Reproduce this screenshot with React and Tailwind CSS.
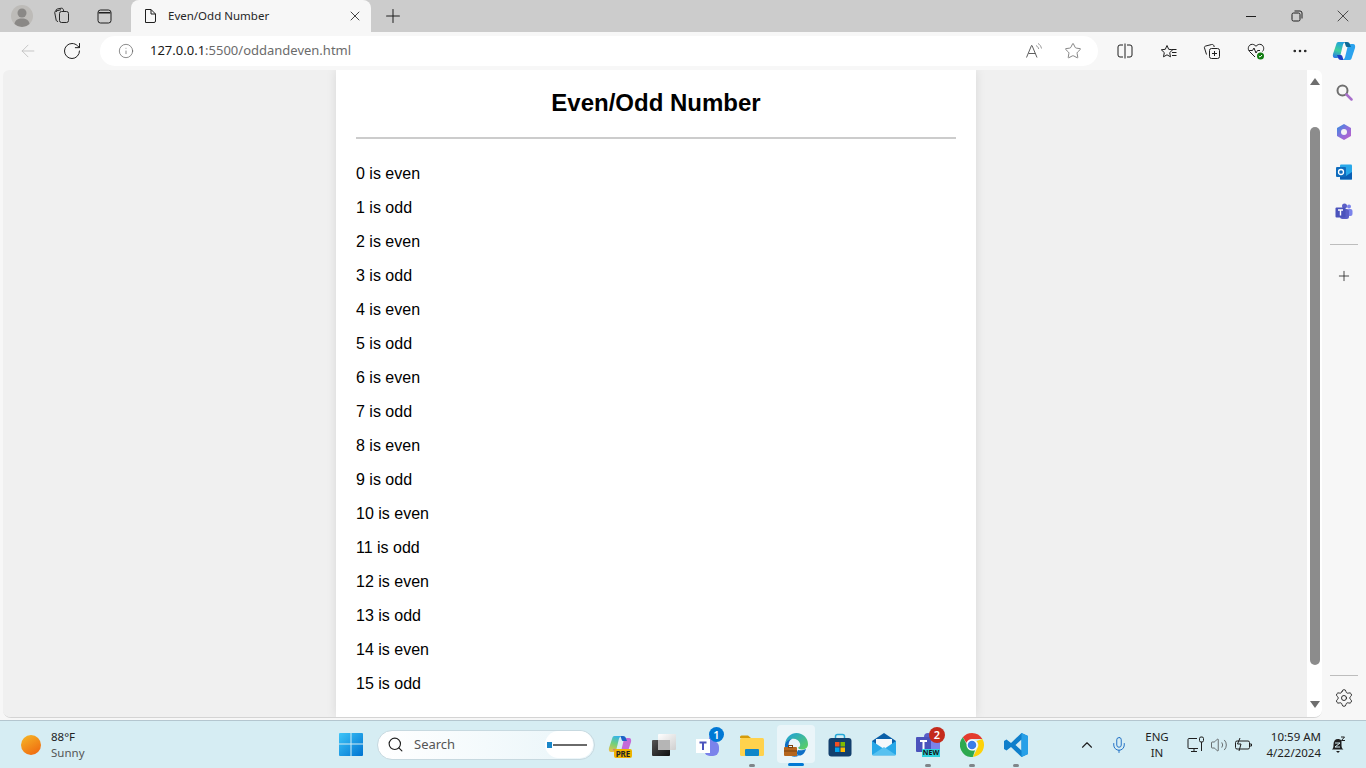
import { ArrowLeft, RotateCw, Info, Star, Plus, X, Search, ChevronUp, Mic, MoreHorizontal, Settings, Volume2 } from "lucide-react";

const NUMBERS = Array.from({ length: 16 }, (_, i) => i);

function ToolbarBtn({ children }) {
  return <div className="flex items-center justify-center w-[43.8px] h-full shrink-0">{children}</div>;
}

function Dot() {
  return <div className="absolute bottom-[1px] left-1/2 -translate-x-1/2 w-[6px] h-[3px] rounded-full bg-[#7f8589]" />;
}

function Copilot({ id, stops, right, top, bottom }) {
  return (
    <svg width="24" height="24" viewBox="0 0 24 24">
      <defs>
        <linearGradient id={id} x1="0.600" y1="0" x2="0.300" y2="1">
          {stops.map((s, i) => (
            <stop key={i} offset={s[0]} stopColor={s[1]} />
          ))}
        </linearGradient>
      </defs>
      <path d="M6.500 3h8c-2 0-3 1-3.600 3L8.500 16c-.5 2-1.500 3-3.500 3H3c-2 0-2.500-2-2-4L4 6c.5-2 1-3 2.500-3z" fill={"url(#" + id + ")"} />
      <path d="M17.500 21h-8c2 0 3-1 3.600-3L15.500 8c.5-2 1.500-3 3.500-3h2c2 0 2.500 2 2 4l-3 9c-.5 2-1 3-2.500 3z" fill={right} />
      <path d="M12.500 3h2.500c2 0 2.600 1 3 2.500L19 8h-3.500c-1 0-1.600-.5-1.900-1.500z" fill={top} />
      <path d="M11.500 21H9c-2 0-2.600-1-3-2.500L5 16h3.500c1 0 1.600.5 1.900 1.500z" fill={bottom} />
    </svg>
  );
}

function Tabs() {
  return (
    <div className="h-8 bg-[#cccccc] flex items-center shrink-0">
      <div className="w-[44px] flex justify-center">
        <svg width="22" height="22" viewBox="0 0 22 22">
          <circle cx="11" cy="11" r="11" fill="#bdbbb8" />
          <circle cx="11" cy="8" r="4.500" fill="#8a8886" />
          <path d="M3.500 19c.5-4 3.500-5.500 7.500-5.500s7 1.500 7.500 5.500a11 11 0 0 1-15 0z" fill="#8a8886" />
        </svg>
      </div>
      <div className="w-[36px] flex justify-center">
        <svg width="18" height="18" viewBox="0 0 18 18" fill="none" stroke="#262626" strokeWidth="1">
          <rect x="6.500" y="4.500" width="9" height="11" rx="2" />
          <path d="M5 14.500c-1 0-1.500-.5-1.800-1.200L1.800 6c-.2-1 .2-1.800 1.200-2l5-1.300" />
          <path d="M3.500 5L3 3.500c0-.8.500-1.300 1.300-1.500l4-.8c1-.1 1.700.4 2 1.300L10.700 4" />
        </svg>
      </div>
      <div className="w-[48px] flex justify-center">
        <svg width="15" height="15" viewBox="0 0 15 15" fill="none" stroke="#1f1f1f" strokeWidth="1">
          <rect x="1" y="1" width="13" height="13" rx="2.500" />
          <path d="M1.500 3h12v1.500h-12z" fill="#1f1f1f" stroke="none" />
        </svg>
      </div>
      <div className="relative h-full w-[240px] ml-[3px] bg-[#f7f7f7] rounded-t-[8px] flex items-center text-[#262626]">
        <svg className="ml-[13px]" width="12" height="14" viewBox="0 0 12 14" fill="none" stroke="#1f1f1f" strokeWidth="1">
          <path d="M1.500.5h5.500l4.500 4.500v7a1.500 1.500 0 0 1-1.500 1.500h-8.500z" strokeLinejoin="round" />
          <path d="M7 .5v4.500h4.500" />
        </svg>
        <span className="ml-[12px] text-[11.5px] font-['Noto_Sans',sans-serif]">Even/Odd Number</span>
        <X className="ml-auto mr-[8px]" size={16} strokeWidth={1.300} />
      </div>
      <div className="w-[44px] flex justify-center">
        <Plus size={22} strokeWidth={1.100} className="text-[#1f1f1f]" />
      </div>
      <div className="ml-auto flex items-center text-[#1f1f1f]">
        <div className="w-[46px] flex justify-center"><div className="w-[10px] h-px bg-[#1f1f1f]" /></div>
        <div className="w-[46px] flex justify-center">
          <svg width="12" height="12" viewBox="0 0 12 12" fill="none" stroke="#1f1f1f" strokeWidth="1">
            <rect x="1" y="3" width="8" height="8" rx="1.500" />
            <path d="M3.500 1h5.500a2 2 0 0 1 2 2v5.500" />
          </svg>
        </div>
        <div className="w-[46px] flex justify-center"><X size={20} strokeWidth={0.900} /></div>
      </div>
    </div>
  );
}

function Toolbar() {
  return (
    <div className="h-[38px] bg-[#f7f7f7] flex items-center shrink-0 overflow-hidden">
      <div className="w-[56px] flex justify-center shrink-0">
        <ArrowLeft size={20} strokeWidth={1} className="text-[#bdbdbd]" />
      </div>
      <div className="w-[32px] flex justify-center shrink-0">
        <RotateCw size={20} strokeWidth={1.200} className="text-[#1f1f1f]" />
      </div>
      <div className="ml-[12px] h-[30px] w-[998px] shrink-0 bg-white rounded-full flex items-center text-[13px] font-['Noto_Sans',sans-serif]">
        <Info size={16} strokeWidth={1} className="ml-[18px] text-[#555]" />
        <span className="ml-[16px] text-[#1a1a1a]">127.0.0.1</span>
        <span className="text-[#6b6b6b]">:5500/oddandeven.html</span>
        <svg className="ml-auto" width="18" height="18" viewBox="0 0 18 18" fill="none" stroke="#5f5f5f" strokeWidth="1">
          <path d="M1.500 15.500L6.500 3.500h.5l5 12M3.500 11.500h7" />
          <path d="M11 3.500c1.500.8 2.300 2 2.700 3.500M13 1.500c2 1 3 2.800 3.500 5" stroke="#9a9a9a" />
        </svg>
        <Star size={18} strokeWidth={1} className="ml-[21px] mr-[16px] text-[#5f5f5f]" />
      </div>
      <div className="ml-[5px] flex items-center h-full shrink-0">
        <ToolbarBtn>
          <svg width="16" height="16" viewBox="0 0 16 16" fill="none" stroke="#1f1f1f" strokeWidth="1">
            <path d="M6 2H3a2 2 0 0 0-2 2v8a2 2 0 0 0 2 2h3M10 2h3a2 2 0 0 1 2 2v8a2 2 0 0 1-2 2h-3M8 .5v15" />
          </svg>
        </ToolbarBtn>
        <ToolbarBtn>
          <svg width="18" height="18" viewBox="0 0 18 18" fill="none" stroke="#1f1f1f" strokeWidth="1">
            <path d="M7 1.500l1.700 3.800 4 .5-3 2.800.8 4.200L7 10.800l-3.500 2 .8-4.200-3-2.800 4-.5z" strokeLinejoin="round" transform="translate(0 2)" />
            <path d="M12 7.500h4.500M12 10.500h4.500M12 13.500h4.500" />
          </svg>
        </ToolbarBtn>
        <ToolbarBtn>
          <svg width="18" height="18" viewBox="0 0 18 18" fill="none" stroke="#1f1f1f" strokeWidth="1">
            <path d="M3.500 12.500L1.500 6c-.3-1 .2-1.800 1.200-2l6-1.500c1-.2 1.800.2 2.200 1.200l.3 1.300" />
            <rect x="6.500" y="6.500" width="10" height="10" rx="2" />
            <path d="M11.500 9v5M9 11.500h5" />
          </svg>
        </ToolbarBtn>
        <ToolbarBtn>
          <svg width="18" height="18" viewBox="0 0 18 18" fill="none">
            <path d="M8 15L2.500 9.500C.5 7.500 1 3.500 4 2.500c2-.6 3.700.3 5 1.800 1.300-1.500 3-2.400 5-1.800 3 1 3.500 5 1.500 7" stroke="#1f1f1f" />
            <path d="M2 8.500h3.500L7 6l2 5 1.500-2.500H13" stroke="#1f1f1f" />
            <circle cx="13.500" cy="14" r="3.500" fill="#107c10" />
            <path d="M11.800 14l1.200 1.200 2-2.200" stroke="#fff" />
          </svg>
        </ToolbarBtn>
        <ToolbarBtn><MoreHorizontal size={18} strokeWidth={1.500} className="text-[#1f1f1f]" /></ToolbarBtn>
        <ToolbarBtn>
          <Copilot
            id="cpTool"
            stops={[[0, "#1f9fe0"], [0.55, "#3dcf9c"], [1, "#2a7be4"]]}
            right="#2ba3ee"
            top="#0c6a96"
            bottom="#1c3fc4"
          />
        </ToolbarBtn>
      </div>
    </div>
  );
}

function Sidebar() {
  return (
    <div className="w-[44px] shrink-0 flex flex-col items-center pt-[13px] bg-[#f7f7f7]">
      <svg width="18" height="18" viewBox="0 0 18 18" fill="none">
        <circle cx="7.500" cy="7.500" r="5" stroke="#6f6f6f" strokeWidth="2" />
        <path d="M11.500 11.500l5 5" stroke="#a86fcb" strokeWidth="2.500" strokeLinecap="round" />
      </svg>
      <svg className="mt-[22px]" width="18" height="18" viewBox="0 0 18 18">
        <defs>
          <linearGradient id="m365" x1="0" y1="0" x2="1" y2="1">
            <stop offset="0" stopColor="#2f8ee0" />
            <stop offset=".5" stopColor="#8b6fdc" />
            <stop offset="1" stopColor="#c25fc9" />
          </linearGradient>
        </defs>
        <path d="M9 1l7 4v8l-7 4-7-4V5z" fill="url(#m365)" />
        <circle cx="9" cy="9" r="3" fill="#f4f4f4" />
      </svg>
      <svg className="mt-[22px]" width="18" height="18" viewBox="0 0 18 18">
        <rect x="5" y="1.500" width="12" height="15" rx="1" fill="#28a8ea" />
        <path d="M5 9l6 4 6-4v7.500H5z" fill="#0a5fb4" />
        <rect x="1" y="4" width="10" height="10" rx="1" fill="#0f6cbd" />
        <circle cx="6" cy="9" r="2.500" fill="none" stroke="#fff" strokeWidth="1.300" />
      </svg>
      <svg className="mt-[22px]" width="18" height="18" viewBox="0 0 18 18">
        <circle cx="14" cy="3.500" r="2" fill="#7b83eb" />
        <rect x="12" y="6" width="5.500" height="7" rx="2" fill="#7b83eb" />
        <circle cx="9.500" cy="3" r="2.500" fill="#5b5fc7" />
        <rect x="5" y="6" width="9" height="10" rx="2.500" fill="#5b5fc7" />
        <rect x=".5" y="4.500" width="10" height="10" rx="1" fill="#4b53bc" />
        <path d="M3 7h5M5.500 7v5.500" stroke="#fff" strokeWidth="1.400" />
      </svg>
      <div className="mt-[23px] w-[28px] h-px bg-[#bdbdbd] shrink-0" />
      <Plus className="mt-[23px]" size={16} strokeWidth={1.200} color="#1f1f1f" />
      <div className="mt-auto w-[28px] h-px bg-[#bdbdbd] shrink-0" />
      <Settings className="mt-[12px] mb-[10px]" size={20} strokeWidth={1.100} color="#1f1f1f" />
    </div>
  );
}

function Scrollbar() {
  return (
    <div className="w-[15px] shrink-0 bg-white flex flex-col items-center">
      <div className="w-0 h-0 mt-[8px] border-x-[5px] border-x-transparent border-b-[7px] border-b-[#6e6e6e]" />
      <div className="mt-[42px] w-[10px] h-[538px] rounded-full bg-[#8c8c8c]" />
      <div className="w-0 h-0 mt-[36px] border-x-[5px] border-x-transparent border-t-[7px] border-t-[#6e6e6e]" />
    </div>
  );
}

function Page() {
  return (
    <div className="flex-1 min-w-0 bg-[#f0f0f0] flex justify-center overflow-hidden pl-[2px] font-['Liberation_Sans',sans-serif] text-black">
      <div className="w-[640px] h-full bg-white px-5 shadow-[0_0_10px_rgba(0,0,0,0.1)]">
        <h1 className="text-[24px] leading-[28px] font-bold text-center pt-[19px]">Even/Odd Number</h1>
        <hr className="mt-[20px] border-0 h-[2px] bg-[#cccccc]" />
        <div className="mt-[26px]">
          {NUMBERS.map((n) => (
            <p key={n} className="text-[16px] leading-[18px] mb-[16px]">
              {n} is {n % 2 === 0 ? "even" : "odd"}
            </p>
          ))}
        </div>
      </div>
    </div>
  );
}

function TaskSlot({ children }) {
  return <div className="relative w-[44px] h-full flex items-center justify-center">{children}</div>;
}

function Taskbar() {
  return (
    <div className="h-[48px] bg-[#d6edf3] border-t border-[#b4c6cf] flex items-center relative font-['Noto_Sans',sans-serif] shrink-0">
      <div className="w-[339px] flex items-center shrink-0">
        <svg className="ml-[20px]" width="22" height="22" viewBox="0 0 22 22">
          <defs>
            <linearGradient id="sun" x1="0.200" y1="0" x2="0.800" y2="1">
              <stop offset="0" stopColor="#f5b325" />
              <stop offset="1" stopColor="#f0680f" />
            </linearGradient>
          </defs>
          <circle cx="11" cy="11" r="10" fill="url(#sun)" />
        </svg>
        <div className="ml-[9px] text-[11.5px] leading-[16px]">
          <div className="text-[#222]">88°F</div>
          <div className="text-[#555]">Sunny</div>
        </div>
      </div>
      <svg width="24" height="24" viewBox="0 0 24 24" className="shrink-0 -mt-[1px]">
        <defs>
          <linearGradient id="win" x1="0" y1="0" x2="1" y2="1">
            <stop offset="0" stopColor="#3ec5f8" />
            <stop offset="1" stopColor="#0073d1" />
          </linearGradient>
        </defs>
        <path d="M1 1h10.500v10.500H0V2a1 1 0 0 1 1-1zM12.500 1H23a1 1 0 0 1 1 1v9.500H12.500zM0 12.500h11.500V24H1a1 1 0 0 1-1-1zM12.500 12.500H24V23a1 1 0 0 1-1 1H12.500z" fill="url(#win)" />
      </svg>
      <div className="ml-[14px] w-[218px] h-[30px] rounded-full bg-gradient-to-r from-[#ffffff] to-[#e9f5f9] border border-[#c7d9e0] flex items-center shrink-0">
        <Search className="ml-[9px]" size={17} strokeWidth={1.600} color="#1f1f1f" />
        <span className="ml-[10px] text-[13px] text-[#555]">Search</span>
        <div className="ml-auto mr-[1px] w-[48px] h-[27px] rounded-full bg-white flex items-center pl-[2px] gap-[1px]">
          <div className="w-[5px] h-[6px] bg-[#1a87c9]" />
          <div className="w-[34px] h-[2px] bg-[#6a6a6a]" />
        </div>
      </div>
      <div className="ml-[3px] flex h-full items-center shrink-0">
        <TaskSlot>
          <Copilot
            id="cpTask"
            stops={[[0, "#35b4ea"], [0.5, "#72d07a"], [1, "#e8c048"]]}
            right="#c46ad8"
            top="#1c62c8"
            bottom="#d85f9c"
          />
          <div className="absolute left-[16px] top-[28px] w-[18px] h-[9px] rounded-[2px] bg-[#f0b400] text-[8px] leading-[9px] font-bold text-[#222] text-center">PRE</div>
        </TaskSlot>
        <TaskSlot>
          <div className="relative w-[24px] h-[22px]">
            <div className="absolute right-0 top-0 w-[18px] h-[16px] rounded-[1px] bg-gradient-to-br from-[#ffffff] to-[#cfcfcf]" />
            <div className="absolute left-0 bottom-0 w-[18px] h-[16px] rounded-[1px] bg-gradient-to-br from-[#555] to-[#111]" />
            <div className="absolute left-[6px] top-[6px] w-[12px] h-[10px] bg-[#b5b5b5]" />
          </div>
        </TaskSlot>
        <TaskSlot>
          <svg width="24" height="24" viewBox="0 0 24 24">
            <circle cx="17" cy="6" r="4" fill="#7b83eb" />
            <rect x="8" y="8" width="15" height="15" rx="6" fill="#7b83eb" />
            <rect x="0" y="6" width="14" height="14" fill="#fff" />
            <path d="M3.500 9.500h7M7 9.500v7.500" stroke="#4b53bc" strokeWidth="2" />
          </svg>
          <div className="absolute right-[6px] top-[6px] w-[15px] h-[15px] rounded-full bg-[#0078d4] text-white text-[11px] leading-[15px] text-center font-semibold">1</div>
        </TaskSlot>
        <TaskSlot>
          <svg width="24" height="24" viewBox="0 0 24 24">
            <path d="M0 4a1.500 1.500 0 0 1 1.500-1.500H8l3 2.500h-11z" fill="#d49b0b" />
            <rect x="0" y="5" width="24" height="18" rx="1.500" fill="#ffd24d" />
            <rect x="5" y="16" width="14" height="7" rx="1" fill="#0f86c9" />
          </svg>
          <Dot />
        </TaskSlot>
        <TaskSlot>
          <div className="absolute left-[3px] top-[4px] w-[38px] h-[38px] rounded-[4px] bg-[#eaf5f9]" />
          <svg className="relative" width="24" height="24" viewBox="0 0 24 24">
            <defs>
              <linearGradient id="edge" x1="0" y1="0" x2="1" y2="1">
                <stop offset="0" stopColor="#1b9de2" />
                <stop offset="1" stopColor="#5fd35a" />
              </linearGradient>
            </defs>
            <path d="M1 11C2 4 7 0 12.500 0 19 0 24 5 24 11c0 4-3 5.500-6 5.500-2 0-4-.7-4-2 2-.5 2.500-2 2-4C15 7 11 5 7.500 6 4 7 2 9 1 11z" fill="url(#edge)" />
            <path d="M1 11c1-3 4-5 7-5-3 1-4 5-3 8 1 4 5 8 10 8.500-1.500.8-3 1.200-4 1.200C5 23.700 0 18 1 11z" fill="#0f6fc6" />
            <path d="M14 17c2 .5 5 .5 8-1-1 4-4 7-7 6.500-2-.3-3-2-1-5.500z" fill="#0f6fc6" />
            <rect x="0" y="14" width="13" height="9" rx="1" fill="#b5651d" />
            <rect x="4.500" y="12.500" width="4" height="2" fill="none" stroke="#7a4210" />
            <rect x="0" y="17.500" width="13" height="1" fill="#7a4210" />
          </svg>
          <div className="absolute bottom-[2px] left-1/2 -translate-x-1/2 w-[16px] h-[3px] rounded-full bg-[#0078d4]" />
        </TaskSlot>
        <TaskSlot>
          <svg width="24" height="24" viewBox="0 0 24 24">
            <path d="M7.500 6V3.500A2 2 0 0 1 9.500 1.500h5a2 2 0 0 1 2 2V6" fill="none" stroke="#25a9d8" strokeWidth="1.500" />
            <rect x="0.500" y="5" width="23" height="18.500" rx="3" fill="#123f6d" />
            <rect x="7" y="9" width="4.500" height="4.500" fill="#f25022" />
            <rect x="12.500" y="9" width="4.500" height="4.500" fill="#7fba00" />
            <rect x="7" y="14.500" width="4.500" height="4.500" fill="#00a4ef" />
            <rect x="12.500" y="14.500" width="4.500" height="4.500" fill="#ffb900" />
          </svg>
        </TaskSlot>
        <TaskSlot>
          <svg width="24" height="24" viewBox="0 0 24 24">
            <path d="M12 0L24 8v3H0V8z" fill="#0a5fa8" />
            <path d="M4 6h16v9H4z" fill="#f4f8fb" />
            <path d="M0 8l12 8 12-8v13a1.500 1.500 0 0 1-1.500 1.500h-21A1.500 1.500 0 0 1 0 21z" fill="#27a8e8" />
            <path d="M0 22l12-8 12 8z" fill="#57c1f0" />
          </svg>
        </TaskSlot>
        <TaskSlot>
          <svg width="24" height="24" viewBox="0 0 24 24">
            <rect x="10" y="6" width="14" height="15" rx="1" fill="#7b83eb" />
            <circle cx="12" cy="4" r="4" fill="#5b5fc7" />
            <rect x="0" y="4" width="15" height="15" rx="1" fill="#4b53bc" />
            <path d="M4 8h7M7.500 8v8" stroke="#fff" strokeWidth="2" />
          </svg>
          <div className="absolute right-[5px] top-[6px] w-[16px] h-[16px] rounded-full bg-[#c42b1c] text-white text-[11px] leading-[16px] text-center font-semibold">2</div>
          <div className="absolute left-[16px] top-[28px] w-[18px] h-[8px] bg-[#2fd2dc] text-[7px] leading-[8px] font-bold text-[#111] text-center">NEW</div>
          <Dot />
        </TaskSlot>
        <TaskSlot>
          <svg width="24" height="24" viewBox="0 0 24 24">
            <path d="M12 0a12 12 0 0 1 10.400 6H12a6 6 0 0 0-5.600 3.800L2.800 4.300A12 12 0 0 1 12 0z" fill="#e33b2e" />
            <path d="M22.400 6A12 12 0 0 1 12.800 24l4.400-8.500A6 6 0 0 0 16.500 8z" fill="#fdd20a" />
            <path d="M12.800 24A12 12 0 0 1 2.800 4.300l5.300 9.500A6 6 0 0 0 15 17.300z" fill="#2da94f" />
            <circle cx="12" cy="12" r="5.500" fill="#fff" />
            <circle cx="12" cy="12" r="4.300" fill="#3b7de8" />
          </svg>
          <Dot />
        </TaskSlot>
        <TaskSlot>
          <svg width="24" height="24" viewBox="0 0 24 24">
            <path d="M17.500 0L24 3v18l-6.500 3L7 14l-4.500 3.500L0 16V8l2.500-1.500L7 10zM17.500 6.500L11.500 12l6 5.500z" fill="#0f7fcb" />
            <path d="M17.500 0L24 3v18l-6.500 3z" fill="#27a0e8" />
          </svg>
          <Dot />
        </TaskSlot>
      </div>
      <div className="ml-[40px] flex items-center h-full shrink-0 text-[#1f1f1f]">
        <ChevronUp size={18} strokeWidth={1.500} />
        <Mic className="ml-[14px]" size={18} strokeWidth={1.300} color="#1f6fc4" />
        <div className="ml-[13px] w-[32px] text-center text-[11.5px] leading-[16px]">ENG<br />IN</div>
        <svg className="ml-[14px]" width="18" height="18" viewBox="0 0 18 18" fill="none" stroke="#1f1f1f" strokeWidth="1">
          <path d="M10 2.500H2a1 1 0 0 0-1 1v8a1 1 0 0 0 1 1h9M4 15.500h6M7 12.500v3" />
          <rect x="12.500" y="1" width="4" height="5" rx="1.500" />
          <path d="M14.500 6v9" />
        </svg>
        <Volume2 className="ml-[5px]" size={18} strokeWidth={1} color="#444" />
        <svg className="ml-[6px]" width="18" height="18" viewBox="0 0 18 18" fill="none" stroke="#1f1f1f" strokeWidth="1">
          <path d="M3 5h11a1.500 1.500 0 0 1 1.500 1.500v5A1.500 1.500 0 0 1 14 13H3a1.500 1.500 0 0 1-1.500-1.500v-5A1.500 1.500 0 0 1 3 5zM16 8h1.500v2H16" />
          <path d="M6 2L3.500 8H7l-2 7" />
        </svg>
        <div className="ml-[9px] w-[60px] text-right text-[11.5px] leading-[16px] text-[#222]">
          10:59 AM<br />4/22/2024
        </div>
        <svg className="ml-[9px]" width="16" height="18" viewBox="0 0 16 18">
          <path d="M2 13.500c1-1 1.500-2 1.500-5C3.500 5 5 3 8 3c1.500 0 2.500.5 3.500 1.500V9c0 2 .5 3.500 2 4.500z" fill="#1f1f1f" />
          <path d="M6 15h4l-2 2z" fill="#1f1f1f" />
          <path d="M11 1h3.500L11.500 4.500H15" fill="none" stroke="#1f1f1f" strokeWidth="1" />
          <path d="M5 7h5l-5 4h5" fill="none" stroke="#d6edf3" strokeWidth="1" />
        </svg>
      </div>
    </div>
  );
}

export default function App() {
  return (
    <div className="w-[1366px] h-[768px] overflow-hidden flex flex-col bg-[#f7f7f7]">
      <Tabs />
      <Toolbar />
      <div className="flex-1 min-h-0 flex pl-[3px] pb-[2px] bg-[#f7f7f7]">
        <div className="flex-1 min-w-0 flex rounded-t-[6px] rounded-b-[8px] overflow-hidden border-b border-[#d4d4d4]">
          <Page />
          <Scrollbar />
        </div>
        <Sidebar />
      </div>
      <Taskbar />
    </div>
  );
}
